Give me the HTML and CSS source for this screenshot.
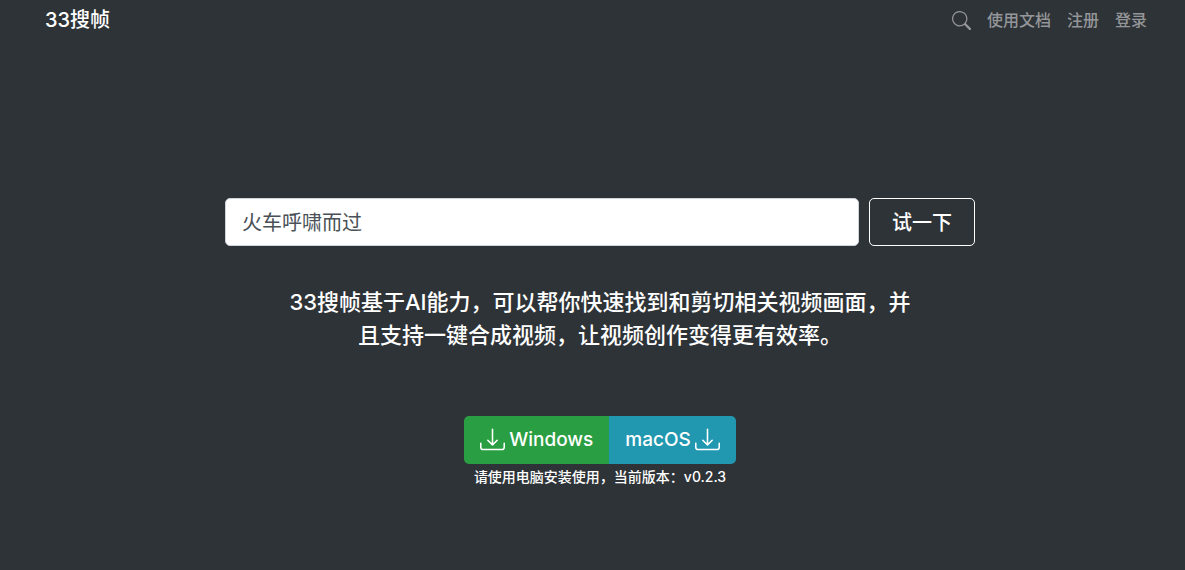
FILE: index.html
```html
<!DOCTYPE html>
<html lang="zh-CN">
<head>
  <meta charset="UTF-8">
  <meta name="viewport" content="width=device-width, initial-scale=1.0">
  <title>33搜帧</title>
  <link rel="stylesheet" href="styles.css">
</head>
<body>
  <header class="navbar">
    <a class="navbar-brand" href="#">33搜帧</a>
    <nav class="navbar-nav">
      <a class="nav-link" href="#" aria-label="搜索">
        <svg class="icon-search" viewBox="0 0 16 16" fill="currentColor">
          <path d="M11.742 10.344a6.5 6.5 0 1 0-1.397 1.398h-.001c.03.04.062.078.098.115l3.85 3.85a1 1 0 0 0 1.415-1.414l-3.85-3.85a1.007 1.007 0 0 0-.115-.1zM12 6.5a5.5 5.5 0 1 1-11 0 5.5 5.5 0 0 1 11 0z"/>
        </svg>
      </a>
      <a class="nav-link" href="#">使用文档</a>
      <a class="nav-link" href="#">注册</a>
      <a class="nav-link" href="#">登录</a>
    </nav>
  </header>

  <main class="hero">
    <form class="search-form">
      <input class="search-input" type="text" value="火车呼啸而过" aria-label="搜索画面">
      <button class="search-button" type="button">试一下</button>
    </form>

    <p class="intro">33搜帧基于AI能力，可以帮你快速找到和剪切相关视频画面，并且支持一键合成视频，让视频创作变得更有效率。</p>

    <div class="downloads">
      <a class="btn btn-windows" href="#">
        <svg class="icon-download" viewBox="0 0 16 16" fill="currentColor">
          <path d="M.5 9.9a.5.5 0 0 1 .5.5v2.5a1 1 0 0 0 1 1h12a1 1 0 0 0 1-1v-2.5a.5.5 0 0 1 1 0v2.5a2 2 0 0 1-2 2H2a2 2 0 0 1-2-2v-2.5a.5.5 0 0 1 .5-.5z"/>
          <path d="M7.646 11.854a.5.5 0 0 0 .708 0l3-3a.5.5 0 0 0-.708-.708L8.500 10.293V1.500a.5.5 0 0 0-1 0v8.793L5.354 8.146a.5.5 0 1 0-.708.708l3 3z"/>
        </svg>
        <span>Windows</span>
      </a>
      <a class="btn btn-macos" href="#">
        <span>macOS</span>
        <svg class="icon-download" viewBox="0 0 16 16" fill="currentColor">
          <path d="M.5 9.9a.5.5 0 0 1 .5.5v2.5a1 1 0 0 0 1 1h12a1 1 0 0 0 1-1v-2.5a.5.5 0 0 1 1 0v2.5a2 2 0 0 1-2 2H2a2 2 0 0 1-2-2v-2.5a.5.5 0 0 1 .5-.5z"/>
          <path d="M7.646 11.854a.5.5 0 0 0 .708 0l3-3a.5.5 0 0 0-.708-.708L8.500 10.293V1.500a.5.5 0 0 0-1 0v8.793L5.354 8.146a.5.5 0 1 0-.708.708l3 3z"/>
        </svg>
      </a>
    </div>
    <small class="version">请使用电脑安装使用，当前版本：v0.2.3</small>
  </main>
</body>
</html>
```
FILE: styles.css
```css
* {
  box-sizing: border-box;
}

body {
  margin: 0;
  padding-left: 15px;
  background-color: #2e3337;
  color: #fff;
  font-family: Inter, "Noto Sans CJK SC", sans-serif;
  font-size: 16px;
  font-weight: 500;
  line-height: 24px;
}

a {
  color: inherit;
  text-decoration: none;
}

/* Top bar */
.navbar {
  display: flex;
  justify-content: space-between;
  align-items: center;
  height: 40px;
  padding: 0 38px 0 30px;
}

.navbar-brand {
  font-size: 20px;
}

.navbar-nav {
  display: flex;
  align-items: center;
  gap: 16px;
  color: #949699;
}

.nav-link {
  display: flex;
}

.icon-search {
  width: 19px;
  height: 19px;
}

/* Hero */
.hero {
  display: flex;
  flex-direction: column;
  align-items: center;
  padding-top: 158px;
}

.search-form {
  display: flex;
  gap: 10px;
  width: 100%;
  max-width: 750px;
}

.search-input {
  flex: 1;
  min-width: 0;
  height: 48px;
  padding: 8px 16px 10px;
  border: 1px solid #ced4da;
  border-radius: 5px;
  background-color: #fff;
  color: #495057;
  font-family: inherit;
  font-size: 20px;
}

.search-button {
  height: 48px;
  padding: 0 22px 2px;
  border: 1px solid #fff;
  border-radius: 5px;
  background-color: transparent;
  color: #fff;
  font-family: inherit;
  font-size: 20px;
  font-weight: 500;
}

.intro {
  max-width: 630px;
  margin: 40px 0 64px;
  font-size: 22px;
  line-height: 33px;
  text-align: center;
}

.downloads {
  display: flex;
  border-radius: 5px;
  overflow: hidden;
}

.btn {
  display: flex;
  align-items: center;
  gap: 4px;
  height: 48px;
  padding: 0 16px;
  font-size: 19px;
}

.btn-windows {
  background-color: #2a9e42;
}

.btn-macos {
  background-color: #2297b0;
}

.icon-download {
  width: 25px;
  height: 25px;
  margin-bottom: 2px;
}

.version {
  font-size: 14px;
  line-height: 26px;
}
```
